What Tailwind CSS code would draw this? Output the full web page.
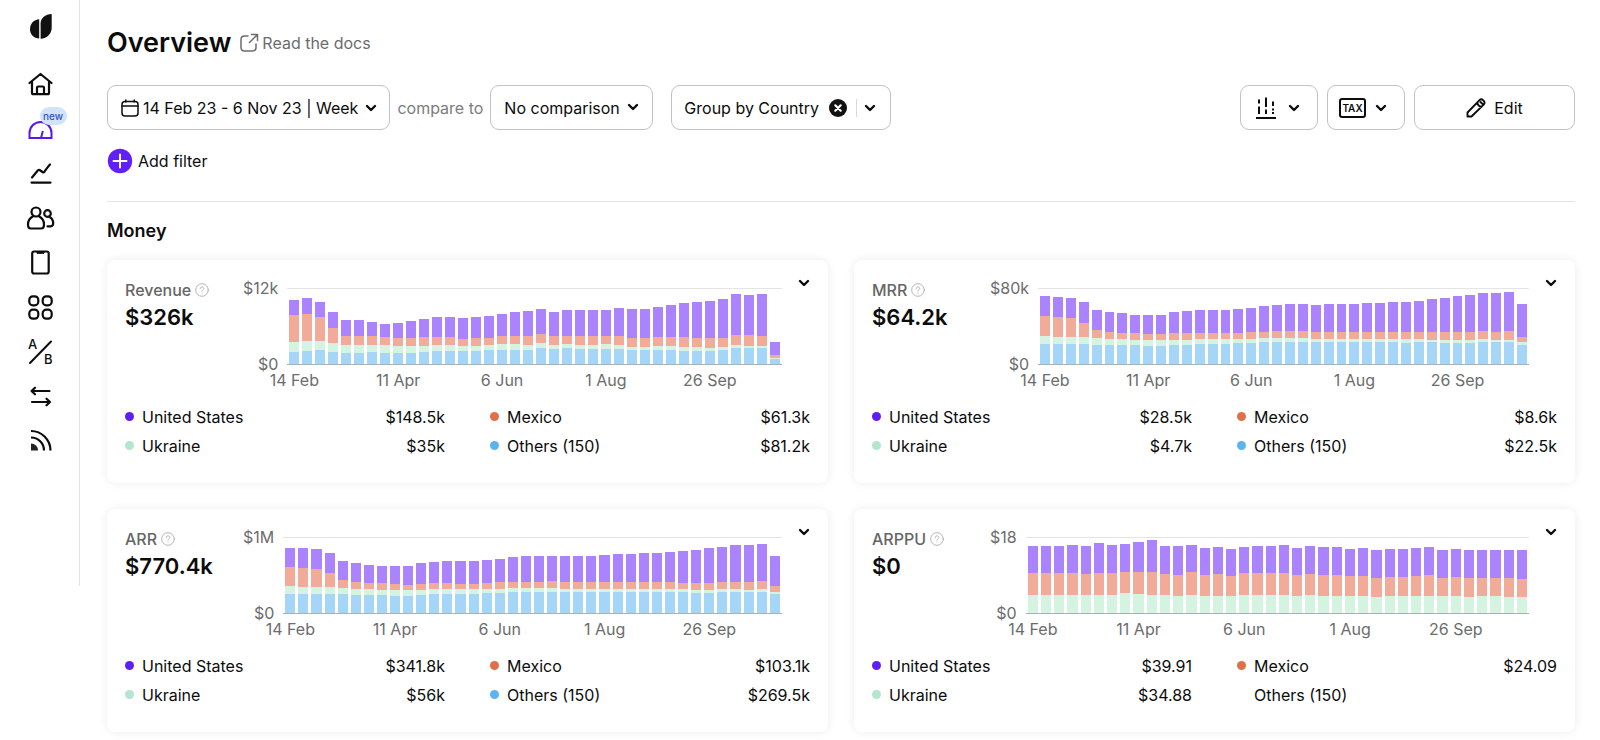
<!DOCTYPE html>
<html lang="en">
<head>
<meta charset="utf-8">
<meta name="viewport" content="width=device-width, initial-scale=1">
<title>Overview</title>
<script src="https://cdn.jsdelivr.net/npm/@tailwindcss/browser@4"></script>
</head>
<body class="bg-white text-[#0c0c0c] font-['Inter','Liberation_Sans',sans-serif] text-base">
<svg class="hidden" aria-hidden="true">
  <symbol id="chevron" viewBox="0 0 12 12"><path d="M2 4l4 4 4-4" fill="none" stroke="currentColor" stroke-width="2.4" stroke-linecap="round" stroke-linejoin="round"/></symbol>
  <symbol id="help" viewBox="0 0 14 14"><g fill="none" stroke="#b4b4b4" stroke-linecap="round"><circle cx="7" cy="7" r="6.3"/><path d="M5.2 5.6c0-1 .8-1.7 1.8-1.7s1.8.7 1.8 1.6c0 1.2-1.8 1.3-1.8 2.5M7 10v.1"/></g></symbol>
</svg>
<div class="flex items-start">
  <nav aria-label="Main" class="w-20 shrink-0 border-r border-[#e4e4e4] flex flex-col items-center pt-3 pl-px pb-[131px]">
    <a href="#" aria-label="Adapty" class="block">
      <svg class="w-7 h-7" viewBox="0 0 28 28" fill="#111"><path d="M13.2 7.3v19.2C7.600 26.200 4 22.300 4 17.200 4 11.800 7.900 7.600 13.200 7.300z"/><path d="M14.600 26.700V11.300c0-5.300 4.600-9.200 11.100-9.400v13.500c0 6.300-4.500 10.900-11.100 11.300z"/></svg>
    </a>
    <ul class="mt-[30px] h-[385px] flex flex-col justify-between">
      <li><a href="#" aria-label="Home" class="block"><svg class="w-[29px] h-[29px]" viewBox="0 0 29 29" fill="none" stroke="#0c0c0c" stroke-width="2.200" stroke-linecap="round" stroke-linejoin="round"><path d="M3.500 13L14.500 4l11 9M6 11.500v11.200c0 .9.600 1.500 1.500 1.500h14c.9 0 1.500-.6 1.500-1.500V11.500M11 24v-6.200c0-.8.500-1.300 1.300-1.300h4.400c.8 0 1.300.5 1.300 1.300V24"/></svg></a></li>
      <li class="relative"><a href="#" aria-label="Overview, new" class="block"><svg class="w-[29px] h-[29px]" viewBox="0 0 29 29" fill="none" stroke="#5a17ee" stroke-width="2" stroke-linecap="square"><path d="M3.500 23v-5a11 11 0 0 1 22 0v5zM15 23l1.600-6"/></svg><span class="absolute left-[14px] -top-2 h-[18px] w-[27px] rounded-full bg-[#d0e3fa] text-[#3558b8] text-[10px] leading-[18px] text-center font-medium">new</span></a></li>
      <li><a href="#" aria-label="Analytics" class="block"><svg class="w-[29px] h-[29px]" viewBox="0 0 29 29" fill="none" stroke="#0c0c0c" stroke-width="2.200" stroke-linecap="round" stroke-linejoin="round"><path d="M6 18.500l6-7.300c.6-.6 1-.6 1.600-.2l2.900 2c.7.500 1.400.5 1.900-.2 1.700-2.300 2.800-4.300 5.600-7.300M5.500 23.600h19"/></svg></a></li>
      <li><a href="#" aria-label="Profiles" class="block"><svg class="w-[29px] h-[29px]" viewBox="0 0 29 29" fill="none" stroke="#0c0c0c" stroke-width="2.200" stroke-linecap="round" stroke-linejoin="round"><circle cx="10" cy="8" r="4.500"/><path d="M7 12.300C4 14 2 16.800 2 20.400c0 2.800 1 4.100 3 4.100h10c2 0 3-1.300 3-4.100 0-3.600-2-6.400-5-8.100"/><circle cx="21.500" cy="9.500" r="3.300"/><path d="M23.200 12.700c2.800 1.300 4 3.600 4 6.600 0 2.300-.8 3-2.600 3H21.500"/></svg></a></li>
      <li><a href="#" aria-label="Apps" class="block"><svg class="w-[29px] h-[29px]" viewBox="0 0 29 29" fill="none" stroke="#0c0c0c" stroke-width="2.200"><rect x="6.200" y="3.500" width="16.500" height="22" rx="2"/><path d="M11 3.800v1.500h7V3.800" fill="#0c0c0c" stroke-width="1"/></svg></a></li>
      <li><a href="#" aria-label="Products" class="block"><svg class="w-[29px] h-[29px]" viewBox="0 0 29 29" fill="none" stroke="#0c0c0c" stroke-width="2.200"><rect x="3.300" y="3.300" width="9" height="9" rx="3.600"/><rect x="16.700" y="3.300" width="9" height="9" rx="3.600"/><rect x="3.300" y="16.700" width="9" height="9" rx="3.600"/><rect x="16.700" y="16.700" width="9" height="9" rx="3.600"/></svg></a></li>
      <li><a href="#" aria-label="A/B tests" class="block"><svg class="w-[29px] h-[29px] font-medium" viewBox="0 0 29 29" fill="#0c0c0c"><text x="2" y="12" font-size="13">A</text><text x="18" y="27" font-size="13">B</text><path d="M4 26L25 4.500" stroke="#0c0c0c" stroke-width="2" stroke-linecap="round"/></svg></a></li>
      <li><a href="#" aria-label="Integrations" class="block"><svg class="w-[29px] h-[29px]" viewBox="0 0 29 29" fill="none" stroke="#0c0c0c" stroke-width="2.200" stroke-linecap="round" stroke-linejoin="round"><path d="M23.500 9H5.500M9 5.700L5.500 9 9 12.300M6 20h18M20.500 16.700L24 20l-3.500 3.300"/></svg></a></li>
      <li><a href="#" aria-label="Feed" class="block"><svg class="w-[29px] h-[29px]" viewBox="0 0 29 29" fill="none" stroke="#0c0c0c" stroke-width="2.200"><path d="M5 24.500v-7a7 7 0 0 1 7 7z" fill="#222" stroke="none"/><path d="M5 11.500a13 13 0 0 1 13 13M5 5a19.500 19.500 0 0 1 19.500 19.500"/></svg></a></li>
    </ul>
  </nav>

  <main class="flex-1 min-w-0 pl-[27px] pr-[25px] pt-[21px] pb-2">
    <header class="flex items-center h-11 gap-2">
      <h1 class="text-[27px] leading-9 font-semibold">Overview</h1>
      <a href="#" class="flex items-center gap-[3px] text-[#6c6c6c]">
        <svg class="w-[20px] h-[20px]" viewBox="0 0 20 20" fill="none" stroke="#6c6c6c" stroke-width="1.500" stroke-linecap="round" stroke-linejoin="round"><path d="M9 3H5.500C3.300 3 2 4.300 2 6.500v8C2 16.700 3.300 18 5.500 18h8c2.200 0 3.500-1.300 3.500-3.500V11M12.500 1.500h6v6M18.300 1.700L10.500 9.500"/></svg>
        Read the docs</a>
    </header>

    <div class="mt-5 flex items-center">
      <button type="button" class="h-[45px] rounded-[9px] border border-[#c2c2c2] flex items-center pl-[13px] pr-3 whitespace-nowrap">
        <svg class="w-[18px] h-[18px] mr-1" viewBox="0 0 18 18" fill="none" stroke="#0c0c0c" stroke-width="1.500" stroke-linecap="round"><rect x="1" y="2.500" width="16" height="14.500" rx="3"/><path d="M1 7h16M4.800 1v2M13.200 1v2"/></svg>
        14 Feb 23 - 6 Nov 23 | Week
        <svg class="w-3 h-3 ml-[7px]"><use href="#chevron"/></svg>
      </button>
      <label for="compare" class="px-[7px] text-[#7c7c7c] whitespace-nowrap">compare to</label>
      <div class="relative">
        <select id="compare" class="block appearance-none h-[45px] rounded-[9px] border border-[#c2c2c2] bg-white pl-[13px] pr-8"><option>No comparison</option></select>
        <svg class="absolute right-[14px] top-4 w-3 h-3 pointer-events-none"><use href="#chevron"/></svg>
      </div>
      <div class="ml-[18px] h-[45px] rounded-[9px] border border-[#c2c2c2] flex items-center pl-3 pr-[14px] whitespace-nowrap">
        <button type="button">Group by Country</button>
        <button type="button" aria-label="Clear grouping" class="ml-[10px]"><svg class="w-[18px] h-[18px]" viewBox="0 0 18 18"><circle cx="9" cy="9" r="9" fill="#111"/><path d="M6.300 6.300l5.400 5.400M11.700 6.300l-5.400 5.400" stroke="#fff" stroke-width="2.200" stroke-linecap="round"/></svg></button>
        <span class="ml-[9px] mr-[7px] w-px h-[18px] bg-[#d9d9d9]"></span>
        <button type="button" aria-label="Choose grouping"><svg class="w-3 h-3"><use href="#chevron"/></svg></button>
      </div>
      <div class="ml-auto flex gap-[9px]">
        <button type="button" aria-label="Chart type" class="w-[78px] h-[45px] rounded-[9px] border border-[#c2c2c2] flex items-center justify-center gap-[11px] pr-[3px]">
          <svg class="w-[22px] h-[24px]" viewBox="0 0 22 24" fill="none" stroke="#0c0c0c" stroke-width="2"><path d="M1 22h20M4 3.500v4M4 10.500v7.500M11 1.500v9.500M11 13.500v4.500M18 5.500v4.500M18 12.500v2M18 16v2"/></svg>
          <svg class="w-3 h-3"><use href="#chevron"/></svg>
        </button>
        <button type="button" aria-label="Tax" class="w-[78px] h-[45px] rounded-[9px] border border-[#c2c2c2] flex items-center justify-center gap-[9px] pr-[6px]">
          <span class="w-[27px] h-5 border-2 border-[#0c0c0c] rounded-[3px] text-[10px] leading-4 font-semibold text-center">TAX</span>
          <svg class="w-3 h-3"><use href="#chevron"/></svg>
        </button>
        <button type="button" class="w-[161px] h-[45px] rounded-[9px] border border-[#c2c2c2] flex items-center justify-center gap-2">
          <svg class="w-[20px] h-[20px]" viewBox="0 0 20 20" fill="none" stroke="#0c0c0c" stroke-width="1.900" stroke-linejoin="round"><path d="M1.500 18.500v-4L13.300 2.300c1.200-1.200 2.600-1.200 3.700-.1l.8.800c1.100 1.100 1.100 2.500-.1 3.700L5.500 18.500zM11.200 4.500c.5 2.500 2 4 4.300 4.300M14 3.500l3 3"/></svg>
          Edit</button>
      </div>
    </div>

    <button type="button" class="mt-[18px] h-[26px] flex items-center gap-[5px]">
      <svg class="w-[26px] h-[26px]" viewBox="0 0 26 26"><circle cx="13" cy="13" r="12.200" fill="#6120f5"/><path d="M13 6.500v13M6.500 13h13" stroke="#fff" stroke-width="2" stroke-linecap="round"/></svg>
      Add filter</button>

    <hr class="mt-[27px] border-t border-[#e4e4e4]">
    <h2 class="mt-[15px] text-lg leading-7 font-semibold">Money</h2>
    <div id="cards" class="mt-[15px] grid grid-cols-2 gap-[26px]"></div>
  </main>
</div>

<script>
// Each week: [total, Mexico + Ukraine + others, Ukraine + others, others], measured down from the axis maximum.
const cards = [
  { name: 'Revenue', value: '$326k', max: '$12k', top: 116,
    legend: ['$148.5k', '$61.3k', '$35k', '$81.2k'],
    weeks: '149,196,277,306 144,191,273,303 154,202,273,302 184,235,279,306 211,257,284,310 210,258,285,311 217,258,285,308 222,262,286,309 219,264,289,309 213,264,289,309 206,262,288,308 201,262,286,305 201,261,285,305 204,266,287,305 201,265,287,304 199,264,285,301 193,258,283,300 186,258,283,300 182,259,285,301 176,251,278,295 186,259,284,299 178,258,282,296 180,259,285,298 179,258,285,299 179,257,283,298 174,258,285,299 176,264,290,302 176,263,290,301 169,261,289,301 165,262,289,302 159,262,290,304 156,264,291,303 151,265,294,304 147,263,291,302 132,255,285,296 135,256,287,296 132,258,288,296 277,317,326,329' },
  { name: 'MRR', value: '$64.2k', max: '$80k', top: 116,
    legend: ['$28.5k', '$8.6k', '$4.7k', '$22.5k'],
    weeks: '137,197,258,282 139,201,260,283 142,204,260,283 155,218,261,283 178,240,264,284 186,245,267,286 190,248,268,286 194,250,269,286 196,252,270,287 195,253,271,287 187,250,269,285 183,249,269,285 180,249,267,283 180,250,268,282 179,250,268,282 176,249,266,280 173,247,266,279 168,245,265,277 165,244,264,277 162,244,264,275 162,244,264,275 163,246,266,276 162,246,266,276 162,247,267,277 160,246,266,276 158,246,266,277 157,246,267,277 155,247,268,277 154,247,268,278 151,246,267,277 147,247,269,277 143,247,270,278 138,247,270,278 134,247,270,278 129,244,268,276 129,245,269,277 126,244,269,276 162,260,276,284' },
  { name: 'ARR', value: '$770.4k', max: '$1M', top: 114,
    legend: ['$341.8k', '$103.1k', '$56k', '$269.5k'],
    weeks: '144,201,259,282 145,204,261,283 148,207,262,283 160,220,263,284 183,241,265,284 190,246,268,286 195,249,269,286 198,251,270,287 200,254,272,288 199,255,272,288 191,252,270,286 187,251,269,284 184,250,268,283 183,252,268,283 183,252,269,282 180,249,267,280 177,248,267,279 172,246,266,277 169,246,266,277 167,246,266,276 167,245,265,276 168,247,267,277 167,247,267,277 168,248,268,277 165,247,267,277 163,247,267,277 162,247,268,278 160,248,268,278 159,248,269,278 157,247,268,278 153,249,269,278 149,249,270,279 144,249,270,279 141,248,269,278 136,246,269,277 136,247,270,278 133,245,269,277 168,260,276,284' },
  { name: 'ARPPU', value: '$0', max: '$18', top: 114,
    legend: ['$39.91', '$24.09', '$34.88', ''],
    weeks: '138,221,287 139,221,287 138,221,287 136,221,286 138,222,287 129,220,286 134,219,285 132,218,281 126,218,282 121,216,285 137,224,287 137,225,288 134,216,285 143,226,289 142,223,288 147,229,291 141,220,286 138,221,287 138,221,287 136,219,286 143,225,288 139,224,287 142,225,288 142,226,289 146,228,288 145,229,290 151,235,292 147,231,289 148,231,290 144,229,290 140,226,289 150,234,291 148,232,290 151,235,292 150,234,291 149,234,290 151,236,292 149,237,292' }
];
const span = 227;
const fills = ['bg-[#ab83ff]', 'bg-[#f2ab99]', 'bg-[#d5f3e1]', 'bg-[#a6d6f7]'];
const places = [['United States', 'bg-[#5f1ff2]'], ['Mexico', 'bg-[#e0704a]'], ['Ukraine', 'bg-[#b3e5cf]'], ['Others (150)', 'bg-[#5cb4ee]']];
const ticks = { 0: '14 Feb', 8: '11 Apr', 16: '6 Jun', 24: '1 Aug', 32: '26 Sep' };

const bar = (week, top) => {
  const y = [...week.split(',').map(Number), top + span];
  return '<div class="flex-1 flex flex-col justify-end rounded-t-[1px] overflow-hidden">' +
    y.slice(0, -1).map((v, k) => `<div class="shrink-0 ${fills[k]}" style="height:${((y[k + 1] - v) / span * 100).toFixed(2)}%"></div>`).join('') + '</div>';
};

document.getElementById('cards').innerHTML = cards.map(c => {
  const weeks = c.weeks.split(' ');
  return `<section class="rounded-lg bg-white shadow-[0_0_10px_rgba(0,0,0,0.08)] px-[18px] pt-[17px] pb-[23px]">
    <div class="flex items-start">
      <div class="w-[118px] shrink-0 pt-[3px]">
        <h3 class="flex items-center gap-1 text-base leading-5 font-medium text-[#666]">${c.name}<svg class="w-[14px] h-[14px]" role="img" aria-label="Help"><use href="#help"/></svg></h3>
        <p class="mt-1 text-[22px] leading-[26px] font-semibold">${c.value}</p>
      </div>
      <div class="flex-1 min-w-0 pt-[11px] flex text-[#6c6c6c]">
        <div class="h-[76px] pr-[9px] flex flex-col justify-between items-end">
          <span class="h-0 flex items-center">${c.max}</span><span class="h-0 flex items-center">$0</span>
        </div>
        <div class="flex-1 min-w-0">
          <div class="h-[77px] border-t border-t-[#e4e4e4] border-b border-b-[#a9b0b5] px-[2px] flex gap-[3px]">${weeks.map(w => bar(w, c.top)).join('')}</div>
          <div class="mt-[3px] h-6 px-[2px] flex gap-[3px]">${weeks.map((w, i) => `<span class="flex-1 w-0 flex justify-center whitespace-nowrap">${ticks[i] || ''}</span>`).join('')}</div>
        </div>
      </div>
      <button type="button" aria-label="Expand ${c.name}" class="w-7 shrink-0 flex justify-end"><svg class="w-3 h-3"><use href="#chevron"/></svg></button>
    </div>
    <ul class="mt-[10px] grid grid-cols-2 gap-x-[45px]">${places.map(([p, dot], i) => `<li class="h-[29px] flex items-center"><span class="w-[9px] h-[9px] mr-2 rounded-full ${c.legend[i] ? dot : 'bg-transparent'}"></span>${p}<span class="ml-auto">${c.legend[i]}</span></li>`).join('')}</ul>
  </section>`;
}).join('');
</script>
</body>
</html>
